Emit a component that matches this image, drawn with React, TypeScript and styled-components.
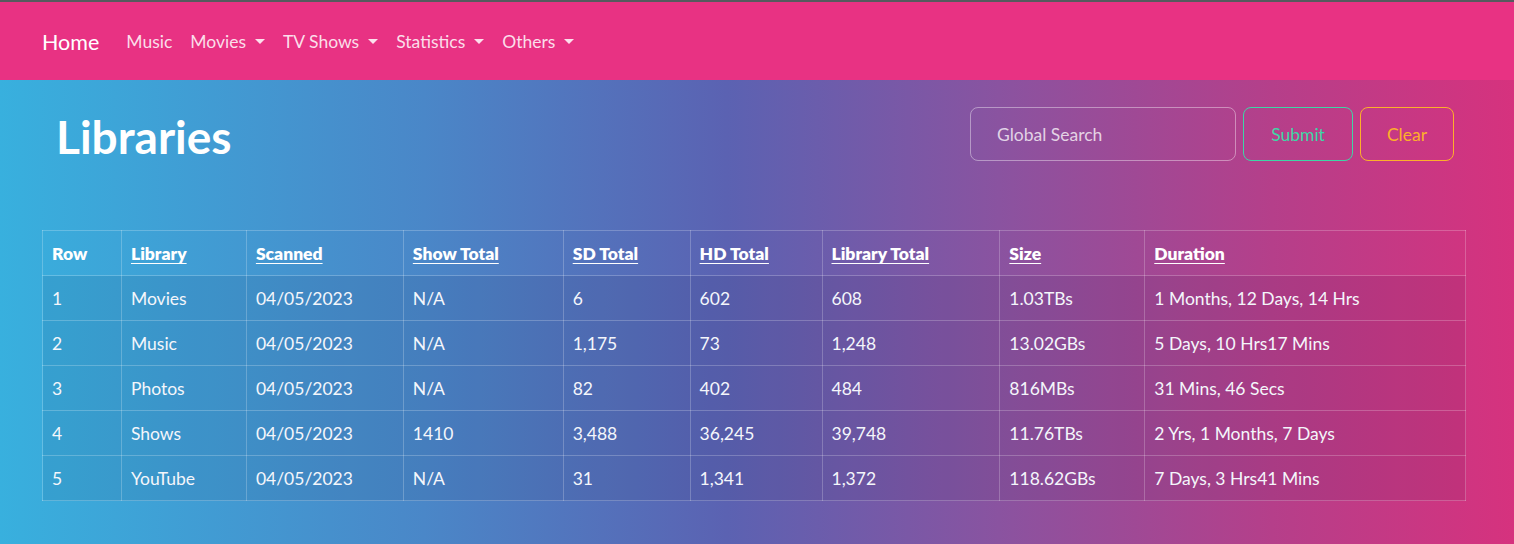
import React from "react";
import styled, { createGlobalStyle } from "styled-components";

const GlobalStyle = createGlobalStyle`
  html, body { margin: 0; padding: 0; }
  body {
    font-family: "Segoe UI", "Lato", "Noto Sans", sans-serif;
    color: #fff;
    min-height: 544px;
    background: linear-gradient(90deg, #38b0de 0%, #4a87c8 28%, #5b62b2 48%, #8a53a0 66%, #b53f8a 84%, #d6327e 100%);
  }
`;

const TopLine = styled.div`
  height: 2px;
  background: #555a5e;
`;

const Navbar = styled.nav`
  height: 78px;
  background: #e83283;
  display: flex;
  align-items: center;
  padding: 0 0 0 42px;
`;

const Brand = styled.a`
  font-size: 21.5px;
  color: #fff;
  margin-right: 27px;
  margin-top: 1px;
`;

const NavLink = styled.a`
  font-size: 17.5px;
  color: rgba(255, 255, 255, 0.85);
  margin-right: 18px;
  display: flex;
  align-items: center;
`;

const Caret = styled.span`
  display: inline-block;
  margin-left: 9px;
  border-top: 5px solid rgba(255, 255, 255, 0.85);
  border-left: 5px solid transparent;
  border-right: 5px solid transparent;
`;

const Main = styled.main`
  padding: 27px 48px 42px 42px;
`;

const Header = styled.div`
  display: flex;
  justify-content: space-between;
  align-items: flex-start;
  margin-bottom: 67px;
`;

const Title = styled.h1`
  margin: 4px 0 0 14px;
  font-size: 46px;
  font-weight: 700;
  line-height: 52px;
`;

const SearchForm = styled.form`
  display: flex;
  gap: 7px;
  margin-right: 12px;
`;

const SearchInput = styled.input`
  width: 266px;
  height: 54px;
  box-sizing: border-box;
  border-radius: 8px;
  border: 1px solid rgba(255, 255, 255, 0.4);
  background: transparent;
  padding: 0 26px;
  font-family: inherit;
  font-size: 17.5px;
  color: #fff;
  &::placeholder { color: rgba(255, 255, 255, 0.75); }
  outline: none;
`;

const OutlineButton = styled.button<{ $color: string; $w: number }>`
  width: ${(p) => p.$w}px;
  height: 54px;
  border-radius: 8px;
  border: 1px solid ${(p) => p.$color};
  color: ${(p) => p.$color};
  background: transparent;
  font-family: inherit;
  font-size: 17.5px;
`;

const Table = styled.table`
  width: 100%;
  border-collapse: collapse;
  border: 1px solid rgba(255, 255, 255, 0.22);
  font-size: 17.5px;
`;

const Th = styled.th<{ $link?: boolean }>`
  text-align: left;
  height: 44px;
  padding: 0 9px;
  border: 1px solid rgba(255, 255, 255, 0.22);
  font-weight: 800;
  text-decoration: ${(p) => (p.$link ? "underline" : "none")};
  text-underline-offset: 3px;
`;

const Tr = styled.tr`
  background: rgba(20, 20, 60, 0.07);
`;

const Td = styled.td`
  height: 44px;
  padding: 0 9px;
  border: 1px solid rgba(255, 255, 255, 0.22);
  color: #f4f6fb;
`;

const cols = [
  { label: "Row", w: 79, link: false },
  { label: "Library", w: 125, link: true },
  { label: "Scanned", w: 157, link: true },
  { label: "Show Total", w: 160, link: true },
  { label: "SD Total", w: 127, link: true },
  { label: "HD Total", w: 132, link: true },
  { label: "Library Total", w: 178, link: true },
  { label: "Size", w: 145, link: true },
  { label: "Duration", w: 321, link: true },
];

const rows = [
  ["1", "Movies", "04/05/2023", "N/A", "6", "602", "608", "1.03TBs", "1 Months, 12 Days, 14 Hrs"],
  ["2", "Music", "04/05/2023", "N/A", "1,175", "73", "1,248", "13.02GBs", "5 Days, 10 Hrs17 Mins"],
  ["3", "Photos", "04/05/2023", "N/A", "82", "402", "484", "816MBs", "31 Mins, 46 Secs"],
  ["4", "Shows", "04/05/2023", "1410", "3,488", "36,245", "39,748", "11.76TBs", "2 Yrs, 1 Months, 7 Days"],
  ["5", "YouTube", "04/05/2023", "N/A", "31", "1,341", "1,372", "118.62GBs", "7 Days, 3 Hrs41 Mins"],
];

export default function App() {
  return (
    <>
      <GlobalStyle />
      <TopLine />
      <Navbar>
        <Brand>Home</Brand>
        <NavLink>Music</NavLink>
        <NavLink>Movies<Caret /></NavLink>
        <NavLink>TV Shows<Caret /></NavLink>
        <NavLink>Statistics<Caret /></NavLink>
        <NavLink>Others<Caret /></NavLink>
      </Navbar>
      <Main>
        <Header>
          <Title>Libraries</Title>
          <SearchForm onSubmit={(e) => e.preventDefault()}>
            <SearchInput placeholder="Global Search" />
            <OutlineButton type="submit" $color="#3ed6a6" $w={110}>Submit</OutlineButton>
            <OutlineButton type="button" $color="#fdb02a" $w={94}>Clear</OutlineButton>
          </SearchForm>
        </Header>
        <Table>
          <colgroup>
            {cols.map((c) => (
              <col key={c.label} style={{ width: c.w }} />
            ))}
          </colgroup>
          <thead>
            <tr>
              {cols.map((c) => (
                <Th key={c.label} $link={c.link}>{c.label}</Th>
              ))}
            </tr>
          </thead>
          <tbody>
            {rows.map((r) => (
              <Tr key={r[0]}>
                {r.map((v, i) => (
                  <Td key={i}>{v}</Td>
                ))}
              </Tr>
            ))}
          </tbody>
        </Table>
      </Main>
    </>
  );
}
